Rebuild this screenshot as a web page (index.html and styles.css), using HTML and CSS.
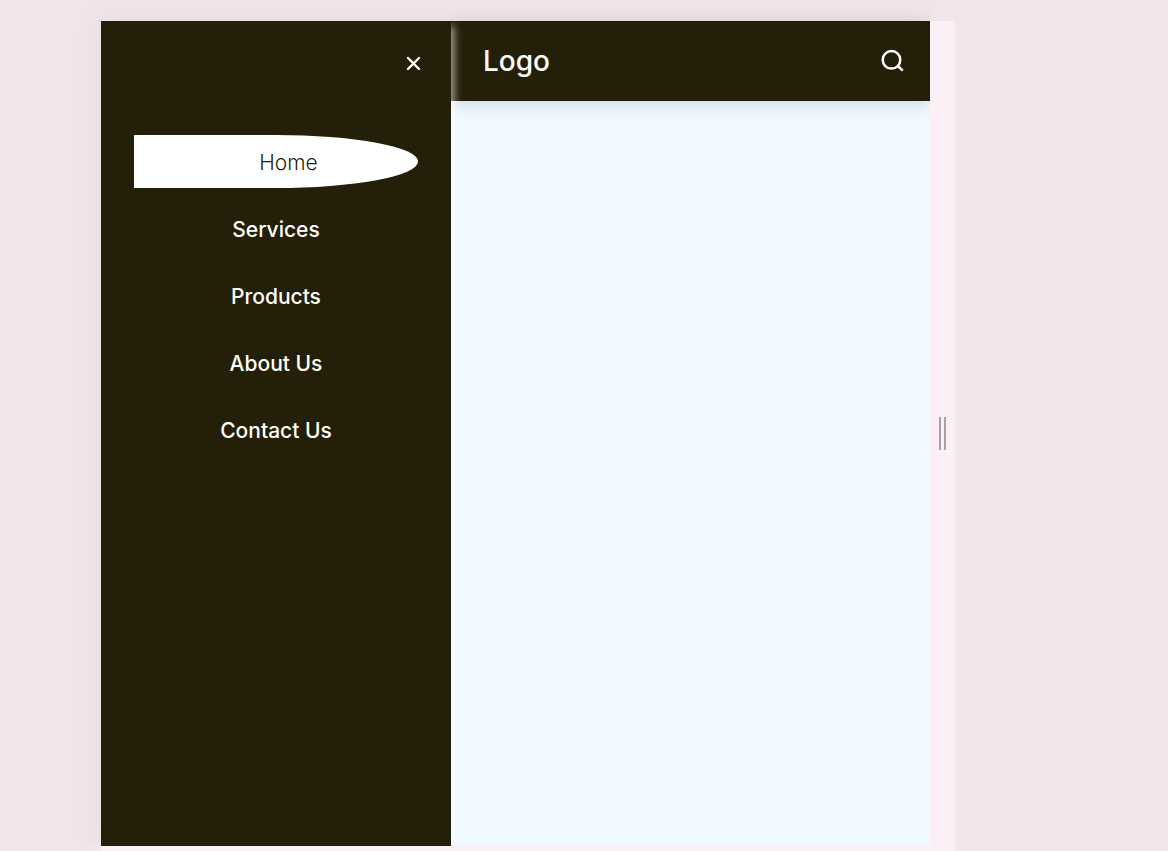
FILE: index.html
```html
<!DOCTYPE html>
<html lang="en">
<head>
<meta charset="utf-8">
<meta name="viewport" content="width=device-width, initial-scale=1">
<title>Sidebar menu</title>
<link rel="stylesheet" href="styles.css">
</head>
<body>
<div class="frame">
  <div class="screen">
    <aside class="sidebar">
      <button class="icon-button close" type="button" aria-label="Close menu">
        <svg width="16" height="16" viewBox="0 0 16 16" fill="none" stroke="currentColor" stroke-width="2.4" stroke-linecap="round"><path d="M3 3l11 11M14 3L3 14"/></svg>
      </button>
      <nav class="menu">
        <a class="menu-link active" href="#home">Home</a>
        <a class="menu-link" href="#services">Services</a>
        <a class="menu-link" href="#products">Products</a>
        <a class="menu-link" href="#about">About Us</a>
        <a class="menu-link" href="#contact">Contact Us</a>
      </nav>
    </aside>
    <main class="content">
      <header class="topbar">
        <a class="logo" href="#home">Logo</a>
        <button class="icon-button" type="button" aria-label="Search">
          <svg width="24" height="24" viewBox="0 0 24 24" fill="none" stroke="currentColor" stroke-width="2.5"><circle cx="10.5" cy="10.8" r="8.8"/><path d="M16.8 17l5 4.6"/></svg>
        </button>
      </header>
    </main>
  </div>
  <div class="grip"></div>
</div>
</body>
</html>
```
FILE: styles.css
```css
* {
  box-sizing: border-box;
}

body {
  margin: 0;
  min-height: 100vh;
  padding: 21px 213px 0 101px;
  display: flex;
  overflow: hidden;
  background: #f1e4ea;
  font-family: Inter, "Open Sans", sans-serif;
}

.frame {
  flex: 1;
  display: flex;
  padding-bottom: 5px;
  background: #faf0f6;
}

.screen {
  flex: 1;
  display: flex;
  background: #f0f9ff;
  box-shadow: 0 0 30px rgba(90, 60, 90, 0.06);
  clip-path: inset(-21px 0 0 -40px);
}

.sidebar {
  flex: 0 0 350px;
  z-index: 1;
  display: flex;
  flex-direction: column;
  padding: 34px 30px 0 33px;
  background: #241f09;
  box-shadow: 3px 5px 8px rgba(255, 255, 255, 0.6);
  clip-path: inset(0 -20px 0 0);
}

.icon-button {
  display: flex;
  padding: 0;
  border: 0;
  background: none;
  color: #fff;
  cursor: pointer;
}

.close {
  align-self: flex-end;
}

.menu {
  display: flex;
  flex-direction: column;
  gap: 14px;
  margin: 64px 3px 0 0;
}

.menu-link {
  padding-top: 2px;
  color: #fffff8;
  font-size: 21px;
  font-weight: 500;
  line-height: 51px;
  text-align: center;
  text-decoration: none;
}

.active {
  padding-left: 25px;
  border-radius: 0 50% 50% 0;
  background: #fff;
  color: #241f09;
  font-weight: 300;
}

.content {
  flex: 1;
}

.topbar {
  display: flex;
  align-items: center;
  justify-content: space-between;
  height: 80px;
  padding: 0 25px 0 32px;
  background: #241f09;
  box-shadow: 0 4px 14px rgba(70, 95, 120, 0.2);
}

.logo {
  color: #fff;
  font-size: 28px;
  font-weight: 500;
  text-decoration: none;
}

.grip {
  align-self: center;
  width: 7px;
  height: 33px;
  margin: 0 9px;
  border: solid #a6a2a5;
  border-width: 0 2px;
}
```
